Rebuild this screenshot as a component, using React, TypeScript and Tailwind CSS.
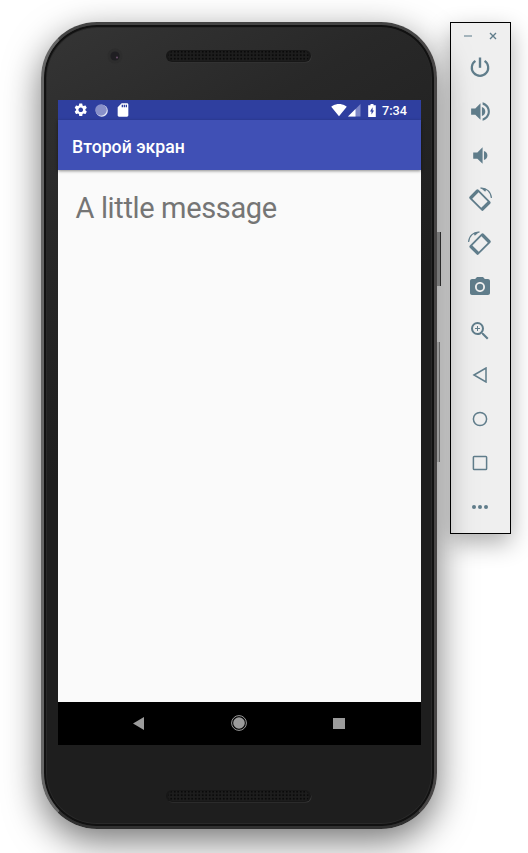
import type { ReactNode } from "react";
import { MdCameraAlt, MdSdStorage, MdSettings, MdSignalWifi4Bar, MdZoomIn } from "react-icons/md";

function PowerIcon() {
  return (
    <svg width="20" height="20" viewBox="0 0 20 20" fill="none" stroke="currentColor">
      <path d="M10 .5v10.3" strokeWidth="2.4" />
      <path d="M5.4 3.8a8.2 8.2 0 1 0 9.2 0" strokeWidth="2.2" />
    </svg>
  );
}

function RotateIcon({ flipped = false }: { flipped?: boolean }) {
  return (
    <svg width="26" height="26" viewBox="0 0 26 26" fill="none" className={flipped ? "-scale-x-100" : ""}>
      <g transform="rotate(45 13 14)">
        <rect x="3.2" y="7.8" width="19.6" height="12.6" rx="1.6" fill="currentColor" />
        <rect x="6.6" y="9.6" width="12.8" height="9" fill="#efefef" />
      </g>
      <path d="M13.5 2.2C19.5 1.6 24 6 24.4 12" stroke="currentColor" strokeWidth="1.2" />
      <path d="M13.5 1.7l6 1.6-1.3 2.4z" fill="currentColor" />
    </svg>
  );
}

function VolumeIcon({ loud = false }: { loud?: boolean }) {
  return (
    <svg width="25" height="25" viewBox="0 0 24 24" fill="currentColor">
      <g transform={loud ? undefined : "translate(2 0)"}>
        <path d="M3 9v6h4l5 5V4L7 9H3z" />
        <path d="M13.3 7.6v8.8C15.6 15.6 16.6 14 16.6 12s-1-3.6-3.3-4.4z" />
        {loud && <path d="M14 3.2v2.2c2.9.9 5 3.5 5 6.6s-2.1 5.7-5 6.6v2.2c4-.9 7-4.5 7-8.8s-3-7.9-7-8.8z" />}
      </g>
    </svg>
  );
}

function Speaker() {
  return (
    <svg width="146" height="13" viewBox="0 0 146 13">
      <defs>
        <pattern id="mesh" width="3.5" height="3.5" patternUnits="userSpaceOnUse">
          <rect width="3.5" height="3.5" fill="#1d1d1d" />
          <circle cx="1.7" cy="1.7" r="1" fill="#080808" />
        </pattern>
      </defs>
      <rect x="1" y="1" width="144.5" height="11.6" rx="5.8" fill="#393939" />
      <rect x="0" y="0" width="145" height="12" rx="6" fill="#171717" />
      <rect x="2" y="1" width="141" height="10" rx="5" fill="url(#mesh)" />
    </svg>
  );
}

function Tool({ children }: { children: ReactNode }) {
  return <div className="flex h-11 items-center justify-center pr-[1px]">{children}</div>;
}

function StatusBar() {
  return (
    <div className="flex h-5 items-center bg-[#2f3f9f] pr-[14px] pl-[15px] text-white">
      <MdSettings size={15.5} />
      <svg width="13" height="13" viewBox="0 0 13 13" className="ml-[6.5px]">
        <circle cx="6.8" cy="6.8" r="6" fill="#e5e8f6" />
        <circle cx="6" cy="6" r="5.8" fill="#8890c9" />
      </svg>
      <MdSdStorage size={16} className="ml-[7px]" />
      <div className="flex-1" />
      <MdSignalWifi4Bar size={16} />
      <svg width="13" height="13" viewBox="0 0 13 13" className="ml-[1px]">
        <path d="M0 12.5L12.5 0v12.5z" fill="#7c86c6" />
        <path d="M0 12.5L7.5 5v7.5z" fill="white" />
      </svg>
      <svg width="8" height="13" viewBox="0 0 8 13" className="ml-[7px]">
        <path d="M2.5 0h3v1.3H7.8V13H.2V1.3h2.3z" fill="white" />
        <path d="M4.6 3.2L2 7.6h1.5v3L6 6.5H4.6z" fill="#2f3f9f" />
      </svg>
      <span className="ml-[6px] pt-[2px] text-[12.7px] leading-[18px] font-medium">7:34</span>
    </div>
  );
}

function Phone() {
  return (
    <div className="relative h-[807px] w-[396px] shrink-0 rounded-[56px] border-[3px] border-t-[#444] border-r-[#484646] border-b-[#303030] border-l-[#666] bg-[linear-gradient(150deg,#353535_0%,#282828_20%,#1e1e1e_45%,#1e1e1e_100%)] pr-[13px] pl-[14px] shadow-[0_12px_36px_rgba(0,0,0,0.55),inset_0_0_0_2px_#111,inset_0_0_0_3px_#292929]">
      <div className="absolute top-[207px] -right-[7px] h-[54px] w-1 border-r border-[#292929] bg-[#777]" />
      <div className="absolute top-[317px] -right-[6px] h-[120px] w-[3px] border-r border-[#666] bg-[#999]" />
      <div className="flex h-[75px] items-start pt-[23px]">
        <svg width="16" height="16" viewBox="0 0 16 16" className="ml-[49px]">
          <circle cx="8" cy="8" r="7.5" fill="#2d2d2d" />
          <circle cx="8" cy="8" r="4.6" fill="#1f1e22" />
          <circle cx="10" cy="9.5" r="1.1" fill="#634c64" />
        </svg>
        <div className="mt-[2px] ml-[43px]">
          <Speaker />
        </div>
      </div>
      <div className="flex h-[645px] w-[363px] flex-col bg-[#fafafa]">
        <StatusBar />
        <div className="z-10 flex h-[50px] items-center bg-[#4050b5] pl-[14px] font-medium text-white shadow-[0_1px_3px_rgba(0,0,0,0.45)]">
          <h1 className="pt-[3px] text-[17.7px] leading-6">Второй экран</h1>
        </div>
        <main className="flex-1 pt-[19px] pl-[17.5px] text-[29px] leading-[38px] tracking-[-0.36px] text-[#757575]">
          A little message
        </main>
        <div className="flex h-[43px] items-center bg-black text-[#9b9b9b]">
          <svg width="11" height="13" viewBox="0 0 11 13" className="ml-[75px]">
            <path d="M0 6.5L11 0v13z" fill="currentColor" />
          </svg>
          <svg width="16" height="16" viewBox="0 0 16 16" className="mb-[1px] ml-[87px]">
            <circle cx="8" cy="8" r="7.4" fill="none" stroke="currentColor" />
            <circle cx="8" cy="8" r="5.8" fill="currentColor" />
          </svg>
          <div className="ml-[86px] size-[11.5px] bg-[#9b9b9b]" />
        </div>
      </div>
      <div className="flex pt-[45px] pl-[108px]">
        <Speaker />
      </div>
    </div>
  );
}

function Toolbar() {
  return (
    <div className="ml-[13px] h-[512px] w-[61px] shrink-0 border border-black bg-[#efefef] text-[#607d8b] shadow-[0_9px_24px_rgba(0,0,0,0.32)]">
      <div className="flex h-[22px] items-center pt-[4px] pl-[13px]">
        <div className="h-[2px] w-[8px] bg-[#a4b4bc]" />
        <svg width="8" height="8" viewBox="0 0 8 8" className="ml-[17px]">
          <path d="M1 1l6 6M7 1L1 7" stroke="currentColor" strokeWidth="1.4" />
        </svg>
      </div>
      <Tool><PowerIcon /></Tool>
      <Tool><VolumeIcon loud /></Tool>
      <Tool><VolumeIcon /></Tool>
      <Tool><RotateIcon /></Tool>
      <Tool><RotateIcon flipped /></Tool>
      <Tool><MdCameraAlt size={24} /></Tool>
      <Tool><MdZoomIn size={24} /></Tool>
      <Tool>
        <svg width="16" height="16" viewBox="0 0 16 16" fill="none">
          <path d="M2 8l12-7v14z" stroke="currentColor" strokeWidth="1.5" />
        </svg>
      </Tool>
      <Tool>
        <svg width="16" height="16" viewBox="0 0 16 16" fill="none">
          <circle cx="8" cy="8" r="6.6" stroke="currentColor" strokeWidth="1.5" />
        </svg>
      </Tool>
      <Tool>
        <svg width="16" height="16" viewBox="0 0 16 16" fill="none">
          <rect x="1.4" y="1.4" width="13.2" height="13.2" rx="0.8" stroke="currentColor" strokeWidth="1.5" />
        </svg>
      </Tool>
      <Tool>
        <div className="flex gap-[2px]">
          <i className="size-1 rounded-full bg-current" />
          <i className="size-1 rounded-full bg-current" />
          <i className="size-1 rounded-full bg-current" />
        </div>
      </Tool>
    </div>
  );
}

export default function App() {
  return (
    <div className="flex h-[853px] w-[528px] items-start overflow-hidden bg-white pt-[22px] pl-[41px] font-[Roboto,sans-serif]">
      <Phone />
      <Toolbar />
    </div>
  );
}
